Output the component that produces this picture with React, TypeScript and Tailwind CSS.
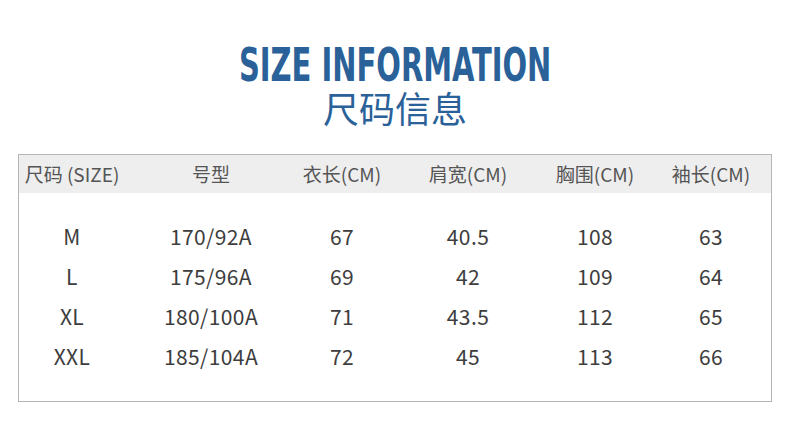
const headers = ['尺码 (SIZE)', '号型', '衣长(CM)', '肩宽(CM)', '胸围(CM)', '袖长(CM)']

const rows = [
  ['M', '170/92A', '67', '40.5', '108', '63'],
  ['L', '175/96A', '69', '42', '109', '64'],
  ['XL', '180/100A', '71', '43.5', '112', '65'],
  ['XXL', '185/104A', '72', '45', '113', '66'],
]

const cols = 'grid grid-cols-[106px_172px_90px_162px_92px_130px]'

const App = () => {
  return (
    <div className="w-[790px] h-[436px] bg-white overflow-hidden font-['Noto_Sans_CJK_SC',sans-serif]">
      {/* Title */}
      <div className="flex flex-col items-center pt-[42px]">
        <div className="text-[#2a6199] font-['DejaVu_Sans_Condensed',sans-serif] font-bold text-[46px] leading-none scale-x-[0.7] whitespace-nowrap">
          SIZE INFORMATION
        </div>
        <div className="text-[#2a6199] text-[36px] leading-none mt-[1px]">尺码信息</div>
      </div>

      {/* Table */}
      <div className="mx-[18px] mt-[29px] w-[754px] border border-[#b5b5b5]">
        <div className={`${cols} h-[38px] bg-[#eeeeee] items-center text-[19px] text-[#555555]`}>
          {headers.map((h, i) => (
            <div key={h} className={`text-center ${i === 5 ? 'pl-[10px]' : ''}`}>
              {h}
            </div>
          ))}
        </div>
        <div className="py-[24px]">
          {rows.map(r => (
            <div key={r[0]} className={`${cols} h-[40px] items-center text-[21px] tracking-[0.4px] text-[#3d3d3d]`}>
              {r.map((c, i) => (
                <div key={i} className={`text-center ${i === 5 ? 'pl-[10px]' : ''}`}>
                  {c}
                </div>
              ))}
            </div>
          ))}
        </div>
      </div>
    </div>
  )
}

export default App
